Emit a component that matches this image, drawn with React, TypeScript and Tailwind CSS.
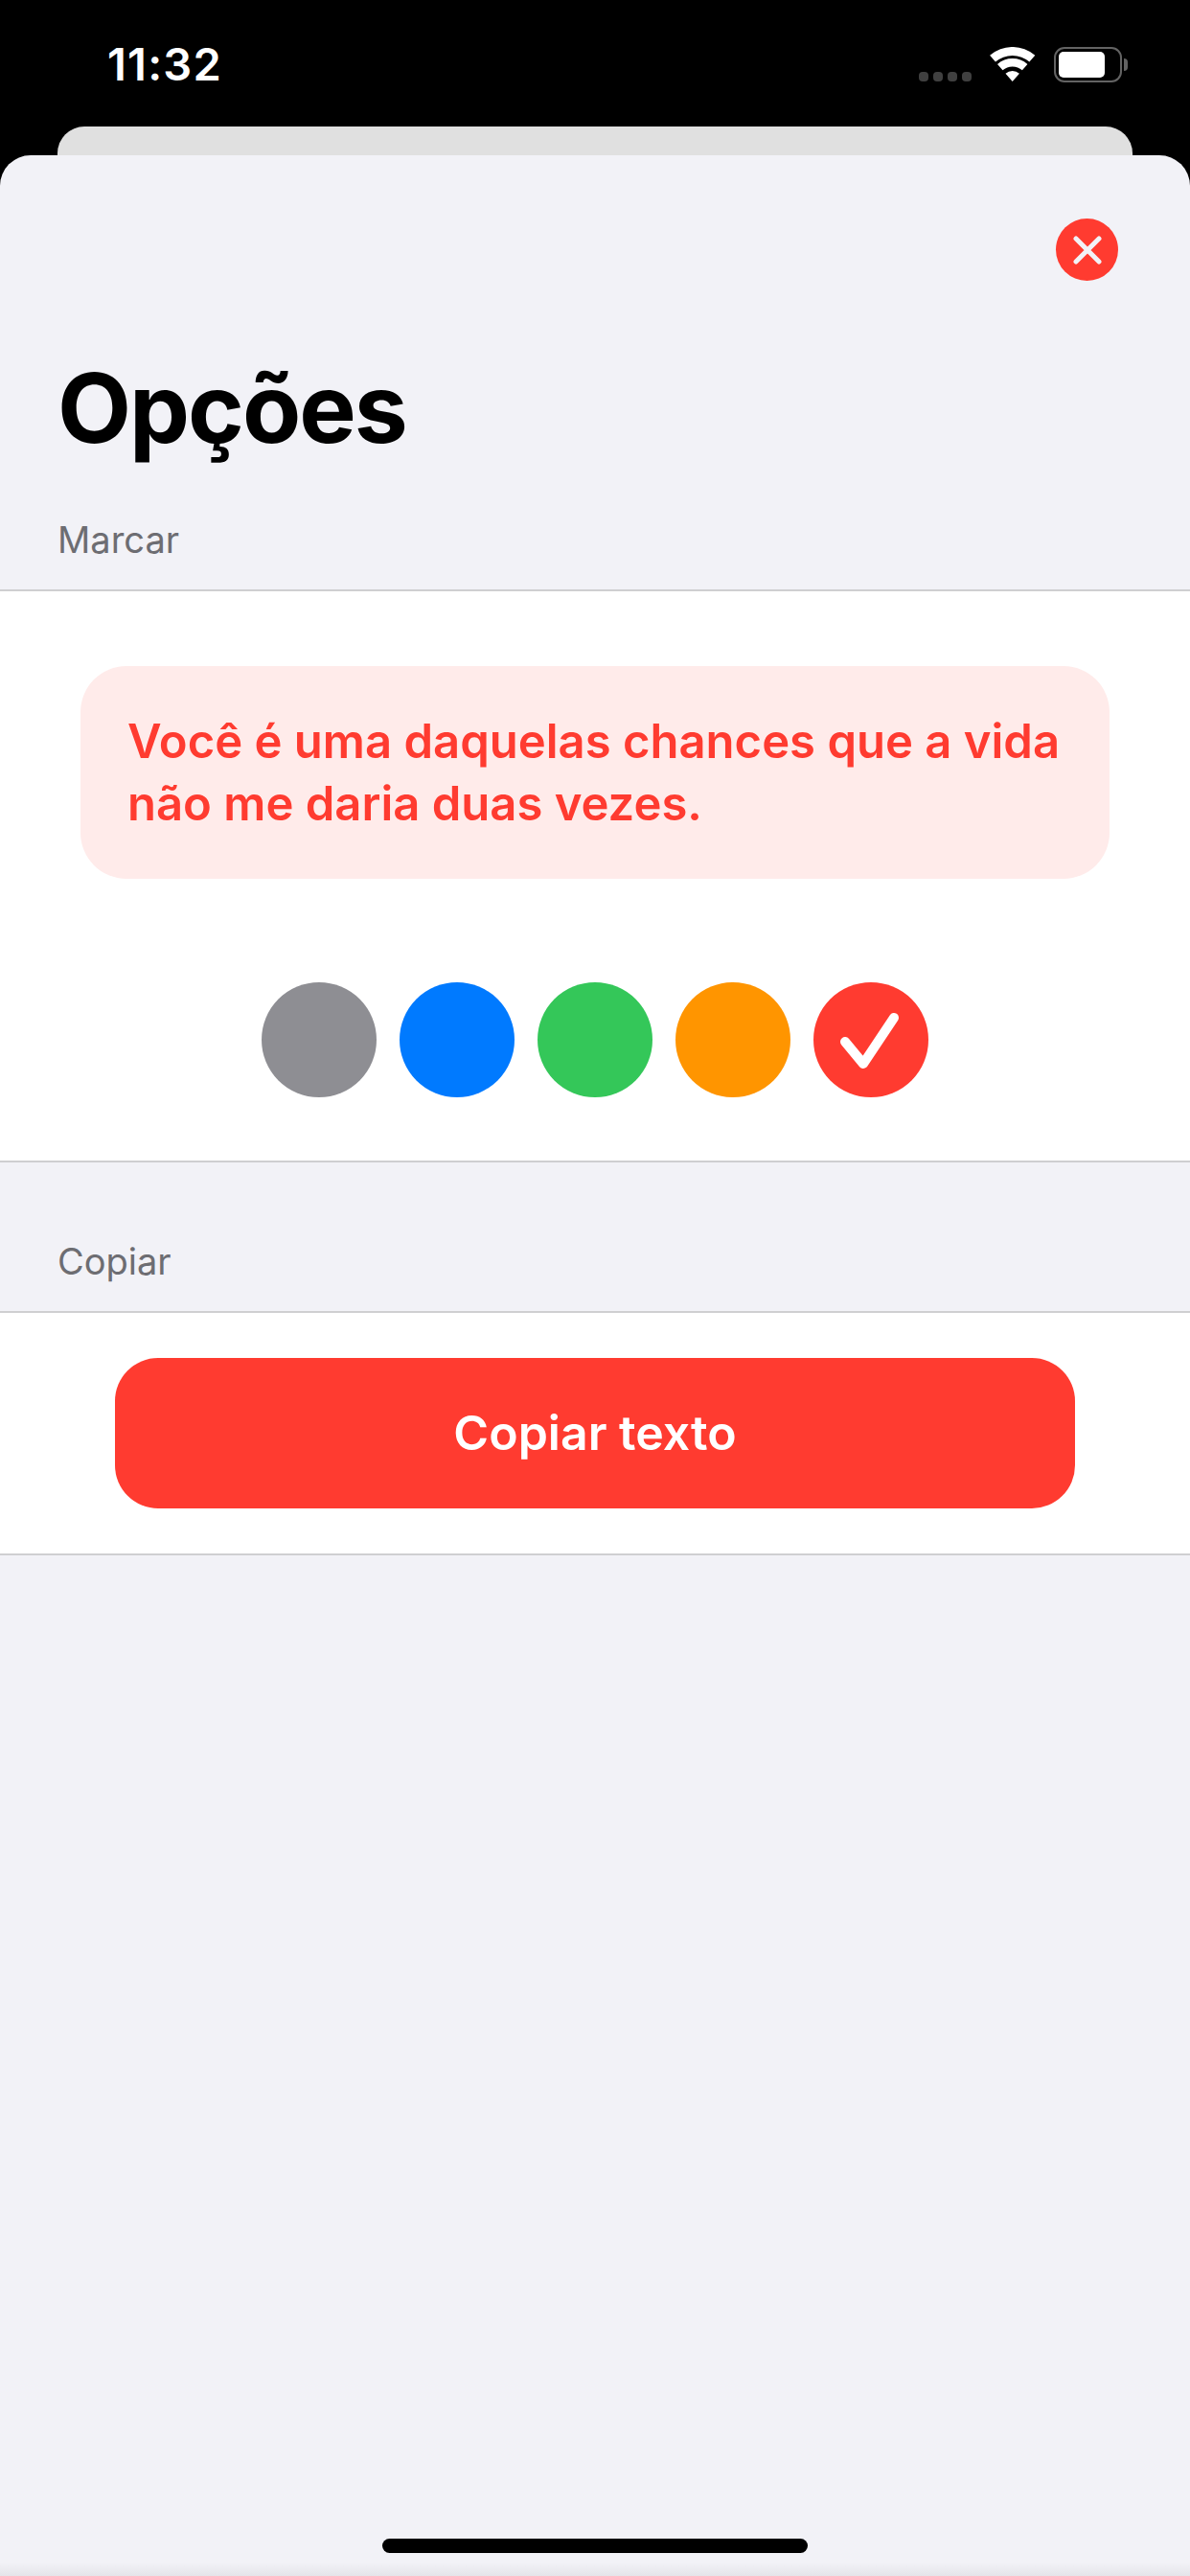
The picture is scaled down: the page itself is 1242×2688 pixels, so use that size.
const font = { fontFamily: '"Inter", "Liberation Sans", sans-serif' };

function WifiIcon() {
  return (
    <svg width="48" height="36" viewBox="0 0 48 36" fill="#fff">
      <path d="M0.1 8.8A36 36 0 0 1 47.3 8.8L41.4 15.6A27 27 0 0 0 6 15.6Z" />
      <path d="M8 17.9A24 24 0 0 1 39.4 17.9L33.9 24.3A15.5 15.5 0 0 0 13.5 24.3Z" />
      <path d="M16.5 27.7A11 11 0 0 1 30.9 27.7L23.7 36Z" />
    </svg>
  );
}

function Battery() {
  return (
    <div className="flex items-center">
      <div className="w-[71px] h-[37px] rounded-[11px] border-[2.5px] border-[#636363] p-[3px]">
        <div className="w-[48px] h-full rounded-[5px] bg-white" />
      </div>
      <div className="w-[4px] h-[13px] ml-[2px] rounded-r-full bg-[#636363]" />
    </div>
  );
}

function StatusBar() {
  return (
    <div className="h-[132px] flex items-start justify-between pt-[43px] pl-[112px] pr-[65px]">
      <span className="text-[47px] leading-[47px] font-semibold text-white tracking-[1.2px]">11:32</span>
      <div className="flex items-start pt-[6px]">
        <div className="flex gap-[5px] mt-[26px] mr-[19px]">
          {[0, 1, 2, 3].map((dot) => (
            <div key={dot} className="w-[10px] h-[10px] rounded-[4px] bg-[#404040]" />
          ))}
        </div>
        <div className="mr-[19px]">
          <WifiIcon />
        </div>
        <Battery />
      </div>
    </div>
  );
}

function SectionLabel({ text, height }: { text: string; height: string }) {
  return (
    <div className={`${height} px-[60px] flex items-end pb-[32px] text-[38px] leading-[40px] text-[#6d6d72]`}>
      {text}
    </div>
  );
}

function CheckDot() {
  return (
    <svg width="120" height="120" viewBox="0 0 120 120" fill="none">
      <circle cx="60" cy="60" r="60" fill="#ff3b30" />
      <path d="M33 62L52 85L84 37" stroke="#fff" strokeWidth="10" strokeLinecap="round" strokeLinejoin="round" />
    </svg>
  );
}

export default function App() {
  const colors = ['bg-[#8e8e93]', 'bg-[#007aff]', 'bg-[#34c759]', 'bg-[#ff9500]'];

  return (
    <div className="w-[1242px] h-[2688px] bg-black overflow-hidden flex flex-col" style={font}>
      <StatusBar />
      <div className="h-[30px] mx-[60px] bg-[#e0e0e0] rounded-t-[28px]" />

      <div className="relative flex-1 flex flex-col bg-[#f2f2f7] rounded-t-[32px]">
        <div className="flex justify-end pt-[66px] pr-[75px]">
          <button className="w-[65px] h-[65px] rounded-full bg-[#ff3b30] flex items-center justify-center" aria-label="Fechar">
            <svg width="34" height="34" viewBox="0 0 34 34" fill="none">
              <path d="M5 5L29 29M29 5L5 29" stroke="#f2f2f7" strokeWidth="5" strokeLinecap="round" />
            </svg>
          </button>
        </div>

        <h1 className="mt-[73px] px-[60px] text-[100px] leading-[120px] font-bold text-black tracking-[-2px]">Opções</h1>

        <SectionLabel text="Marcar" height="h-[129px]" />

        <div className="bg-white border-y-2 border-[#cfcfd1] h-[598px] flex flex-col">
          <div className="mt-[78px] mx-[84px] h-[222px] rounded-[48px] bg-[#ffebea] px-[49px] py-[46px] text-[49px] leading-[65px] font-semibold text-[#ff3b30]">
            Você é uma daquelas chances que a vida
            <br />
            não me daria duas vezes.
          </div>
          <div className="mt-[108px] flex justify-center gap-[24px]">
            {colors.map((color) => (
              <div key={color} className={`w-[120px] h-[120px] rounded-full ${color}`} />
            ))}
            <CheckDot />
          </div>
        </div>

        <SectionLabel text="Copiar" height="h-[155px]" />

        <div className="bg-white border-y-2 border-[#cfcfd1] h-[255px] px-[120px] pt-[47px]">
          <button className="w-full h-[157px] rounded-[45px] bg-[#ff3b30] text-white text-[50px] font-semibold">
            Copiar texto
          </button>
        </div>

        <div className="absolute left-[399px] bottom-[24px] w-[444px] h-[15px] rounded-full bg-black" />
        <div className="absolute left-0 right-0 bottom-0 h-[14px] bg-gradient-to-b from-transparent to-[#e4e4e9]" />
      </div>
    </div>
  );
}
